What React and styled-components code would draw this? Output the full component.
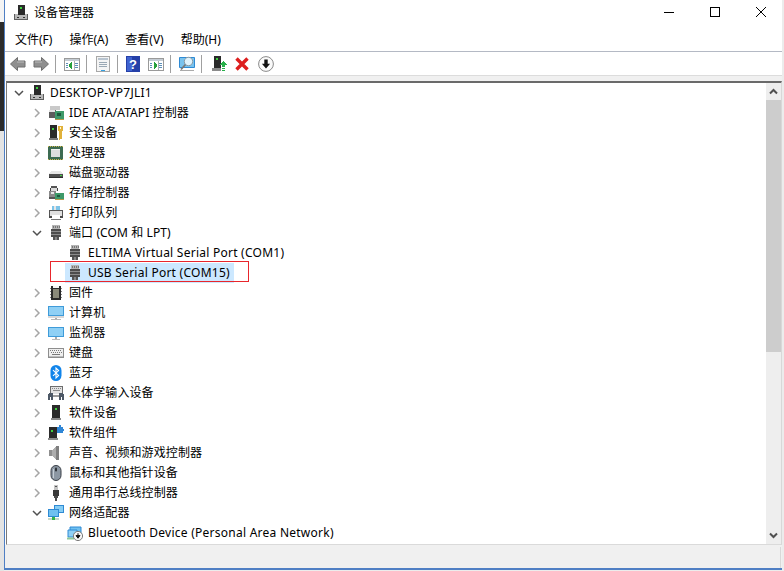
import React from 'react';
import styled, { createGlobalStyle } from 'styled-components';

const GlobalStyle = createGlobalStyle`
  html, body {
    margin: 0;
    padding: 0;
    height: 100%;
    background: #ececec;
    overflow: hidden;
  }
  body {
    font-family: "Noto Sans", "Noto Sans CJK SC", sans-serif;
    font-size: 12px;
    color: #000;
  }
`;

const Desktop = styled.div`
  display: flex;
  width: 784px;
  height: 571px;
`;

const Strip = styled.div`
  width: 4px;
  flex: none;
  background: linear-gradient(to bottom, #f4f4f4 0, #f4f4f4 22px, #2b2b2b 22px, #2b2b2b 131px, #e4e4e4 131px, #e4e4e4 100%);
`;

const Frame = styled.div`
  width: 778px;
  height: 570px;
  flex: none;
  display: flex;
  flex-direction: column;
  background: #fff;
  border-left: 1px solid #4f7fc4;
  border-bottom: 2px solid #4f7fc4;
  box-sizing: border-box;
`;

const TitleBar = styled.div`
  height: 25px;
  flex: none;
  display: flex;
  align-items: center;
  padding-left: 8px;
`;

const TitleText = styled.span`
  margin-left: 5px;
  font-size: 12px;
  line-height: 16px;
`;

const WindowButtons = styled.div`
  margin-left: auto;
  margin-right: -2px;
  display: flex;
  height: 100%;
  align-items: center;
`;

const WindowButton = styled.div`
  width: 46px;
  height: 23px;
  margin-bottom: 2px;
  display: flex;
  align-items: center;
  justify-content: center;
`;

const MenuBar = styled.div`
  height: 27px;
  flex: none;
  display: flex;
  align-items: center;
  padding: 3px 0 0 10px;
  gap: 17px;
  box-sizing: border-box;
  border-bottom: 1px solid #b4b9c4;
`;

const MenuItem = styled.span`
  line-height: 16px;
`;

const ToolBar = styled.div`
  height: 23px;
  flex: none;
  display: flex;
  align-items: center;
  padding-left: 5px;
`;

const ToolIcon = styled.div`
  width: ${(p) => p.$w || 16}px;
  height: 16px;
  flex: none;
  margin-left: ${(p) => p.$gap || 0}px;
  display: flex;
`;

const ToolSep = styled.div`
  width: 1px;
  height: 18px;
  flex: none;
  background: #a0a0a0;
  margin: 0 ${(p) => p.$after || 8}px 0 ${(p) => p.$before || 6}px;
`;

const GapBand = styled.div`
  height: 6px;
  flex: none;
  background: #f0f0f0;
  border-top: 1px solid #dcdcdc;
  box-sizing: border-box;
`;

const Body = styled.div`
  flex: none;
  height: 464px;
  margin-left: 1px;
  width: 776px;
  display: flex;
  box-sizing: border-box;
  border-top: 2px solid #6a6a6a;
  border-left: 1px solid #7a7a7a;
  border-right: 1px solid #d8d8d8;
  border-bottom: 1px solid #dadada;
`;

const Tree = styled.div`
  flex: 1;
  min-width: 0;
  overflow: hidden;
`;

const Row = styled.div`
  position: relative;
  height: 20px;
  display: flex;
  align-items: center;
  padding-left: ${(p) => p.$indent}px;
`;

const Caret = styled.div`
  width: 12px;
  height: 12px;
  flex: none;
  display: flex;
  align-items: center;
  justify-content: center;
  margin-right: ${(p) => p.$gap || 5}px;
`;

const NodeBody = styled.div`
  display: flex;
  align-items: center;
  height: 20px;
  margin-left: ${(p) => (p.$selected ? '-2px' : '0')};
  padding: 0 ${(p) => (p.$selected ? '4px' : '2px')} 0 ${(p) => (p.$selected ? '2px' : '0')};
  background: ${(p) => (p.$selected ? '#cce8ff' : 'transparent')};
`;

const NodeIcon = styled.div`
  width: 16px;
  height: 16px;
  flex: none;
  display: flex;
`;

const NodeLabel = styled.span`
  margin-left: 5px;
  line-height: 16px;
  white-space: nowrap;
  letter-spacing: ${(p) => (p.$latin ? '0.25px' : '0.1px')};
`;

const RedMark = styled.div`
  position: absolute;
  left: 43px;
  top: -2px;
  width: 197px;
  height: 19px;
  border: 1px solid #e8262c;
  pointer-events: none;
`;

const ScrollBar = styled.div`
  width: 15px;
  flex: none;
  display: flex;
  flex-direction: column;
  background: #eeeeee;
`;

const ScrollEnd = styled.div`
  height: 17px;
  flex: none;
  display: flex;
  align-items: center;
  justify-content: center;
`;

const ScrollThumb = styled.div`
  height: 252px;
  flex: none;
  background: #cdcdcd;
`;

const ScrollTrack = styled.div`
  flex: 1;
`;

const StatusBar = styled.div`
  flex: 1;
  background: #f0f0f0;
  display: flex;
  justify-content: flex-end;
  padding: 2px 1px 0 0;
`;

const StatusGrip = styled.div`
  width: 1px;
  background: #d8d8d8;
`;

const Ico = ({ children, w = 16 }) => (
  <svg width={w} height="16" viewBox={`0 0 ${w} 16`} shapeRendering="crispEdges">
    {children}
  </svg>
);

const Soft = ({ children, w = 16 }) => (
  <svg width={w} height="16" viewBox={`0 0 ${w} 16`}>
    {children}
  </svg>
);

const Tower = () => (
  <>
    <path d="M5 0h7v10H5z" fill="#2a2a2a" />
    <path d="M7 2h2v2H7z" fill="#3fd13f" />
    <path d="M1 9h4v1h7V9h3v6H1z" fill="#b8b8b8" />
    <path d="M1 9h1v6H1zM14 9h1v6h-1zM1 14h14v1H1z" fill="#5f5f5f" />
    <path d="M4 12h2v1H4zM10 12h2v1h-2z" fill="#333" />
  </>
);

const PortShape = () => (
  <>
    <path d="M4 0h8v4H4z" fill="#b5b5b5" />
    <path d="M5 1h1v2H5zM7 1h1v2H7zM9 1h1v2H9zM11 1h1v2h-1z" fill="#777" />
    <path d="M3 4h10v8H3z" fill="#4d4d4d" />
    <path d="M3 6h10v1H3zM3 9h10v1H3z" fill="#8c8c8c" />
    <path d="M5 12h6v3H5z" fill="#555" />
    <path d="M7 12h2v3H7z" fill="#888" />
  </>
);

const icons = {
  computer: <Ico><Tower /></Ico>,
  ide: (
    <Ico>
      <path d="M2 1h10v4H2z" fill="#c9c9c9" />
      <path d="M1 5h7v8H1z" fill="#5d5d5d" />
      <path d="M1 5h6v2H1z" fill="#e4e4e4" />
      <path d="M7 6h9v8H7z" fill="#3e9a6a" />
      <path d="M9 8h4v3H9z" fill="#1e5a3e" />
      <path d="M7 14h9v1H7z" fill="#b59a4a" />
    </Ico>
  ),
  security: (
    <Ico>
      <path d="M2 0h7v13H2z" fill="#2a2a2a" />
      <path d="M4 3h2v2H4z" fill="#3fd13f" />
      <path d="M1 13h9v2H1z" fill="#777" />
      <path d="M10 1h5v5h-1v8h-2v1h-1V6h-1z" fill="#e0b13a" />
      <path d="M12 2h1v2h-1z" fill="#fff6d8" />
    </Ico>
  ),
  cpu: (
    <Ico>
      <path d="M0 1h15v14H0z" fill="#3d6b52" />
      <path d="M0 1h1v1H0zM2 1h1v1H2zM4 1h1v1H4zM6 1h1v1H6zM8 1h1v1H8zM10 1h1v1h-1zM12 1h1v1h-1zM14 1h1v1h-1zM0 14h1v1H0zM2 14h1v1H2zM4 14h1v1H4zM6 14h1v1H6zM8 14h1v1H8zM10 14h1v1h-1zM12 14h1v1h-1zM14 14h1v1h-1z" fill="#c9b54f" />
      <path d="M3 4h9v8H3z" fill="#dedede" />
      <path d="M3 4h9v1H3z" fill="#f2f2f2" />
    </Ico>
  ),
  disk: (
    <Ico>
      <path d="M3 6h10l2 3H1z" fill="#e6e6e6" />
      <path d="M1 9h14v4H1z" fill="#4e4e4e" />
      <path d="M1 12h14v1H1z" fill="#2f2f2f" />
      <path d="M12 10h2v1h-2z" fill="#45d645" />
    </Ico>
  ),
  storage: (
    <Ico>
      <path d="M3 1h6v2H3z" fill="#555" />
      <path d="M2 3h8v3H2z" fill="#dcdcdc" />
      <path d="M2 3h1v3H2zM9 3h1v3H9z" fill="#444" />
      <path d="M1 6h7v6H1z" fill="#8a8a8a" />
      <path d="M3 7h3v2H3z" fill="#e8e8e8" />
      <path d="M1 12h6v2H1z" fill="#555" />
      <path d="M7 8h9v6H7z" fill="#3e9a6a" />
      <path d="M9 10h3v2H9z" fill="#1e5a3e" />
      <path d="M7 14h9v1H7z" fill="#b59a4a" />
    </Ico>
  ),
  printer: (
    <Ico>
      <path d="M4 1h8v4H4z" fill="#7ec4e8" />
      <path d="M6 1h2v4H6z" fill="#e6e6e6" />
      <path d="M1 5h14v7H1z" fill="#e0e0e0" />
      <path d="M1 5h14v1H1zM1 6h1v6H1zM14 6h1v6h-1z" fill="#555" />
      <path d="M1 11h14v2H1z" fill="#4a4a4a" />
      <path d="M4 10h8v4H4z" fill="#fff" />
      <path d="M3 14h10v1H3z" fill="#777" />
    </Ico>
  ),
  port: <Ico><PortShape /></Ico>,
  firmware: (
    <Ico>
      <path d="M3 1h10v14H3z" fill="#2a2a2a" />
      <path d="M5 1h6v2H5z" fill="#f6f6f6" />
      <path d="M5 4h6v9H5z" fill="#8a8a7a" />
      <path d="M2 3h1v1H2zM2 6h1v1H2zM2 9h1v1H2zM2 12h1v1H2zM13 3h1v1h-1zM13 6h1v1h-1zM13 9h1v1h-1zM13 12h1v1h-1z" fill="#888" />
    </Ico>
  ),
  pc: (
    <Ico>
      <path d="M0 1h16v10H0z" fill="#3f9bd9" />
      <path d="M1 2h14v8H1z" fill="#8fd0f5" />
      <path d="M0 11h16v2H0z" fill="#d8d8d8" />
      <path d="M7 13h2v1H7z" fill="#aaa" />
      <path d="M3 14h10v1H3z" fill="#b8b8b8" />
    </Ico>
  ),
  monitor: (
    <Ico>
      <path d="M0 2h16v10H0z" fill="#3f9bd9" />
      <path d="M1 3h14v8H1z" fill="#8fd0f5" />
      <path d="M7 12h2v2H7z" fill="#aaa" />
      <path d="M4 14h8v1H4z" fill="#bbb" />
    </Ico>
  ),
  keyboard: (
    <Ico>
      <path d="M0 3h16v10H0z" fill="#8e8e8e" />
      <path d="M1 4h14v8H1z" fill="#efefef" />
      <path d="M2 5h1v1H2zM4 5h1v1H4zM6 5h1v1H6zM8 5h1v1H8zM10 5h1v1h-1zM12 5h1v1h-1zM3 7h1v1H3zM5 7h1v1H5zM7 7h1v1H7zM9 7h1v1H9zM11 7h1v1h-1zM13 7h1v1h-1zM4 9h8v1H4z" fill="#7a7a7a" />
      <path d="M1 11h14v1H1z" fill="#bdbdbd" />
    </Ico>
  ),
  bluetooth: (
    <Soft>
      <rect x="2.5" y="0" width="11" height="16" rx="5.5" fill="#1184ea" />
      <path d="M5 5.2L10.6 10.4 8 13V3L10.6 5.6 5 10.8" fill="none" stroke="#fff" strokeWidth="1.1" />
    </Soft>
  ),
  hid: (
    <Ico>
      <path d="M2 1h13v8H2z" fill="#e2e2e2" />
      <path d="M2 1h13v1H2zM2 2h1v7H2zM14 2h1v7h-1z" fill="#6d6d6d" />
      <path d="M4 3h1v1H4zM6 3h1v1H6zM8 3h1v1H8zM10 3h1v1h-1zM12 3h1v1h-1zM5 5h7v1H5z" fill="#888" />
      <path d="M1 8h4v7H3v-3H2v3H0V9h1z" fill="#4d5866" />
      <path d="M11 8h4v1h1v6h-2v-3h-1v3h-2z" fill="#4d5866" />
      <path d="M5 10h6v2H5z" fill="#9a9a9a" />
    </Ico>
  ),
  softdev: (
    <Ico>
      <path d="M4 0h8v13H4z" fill="#2a2a2a" />
      <path d="M7 3h2v2H7z" fill="#3fd13f" />
      <path d="M3 13h10v2H3z" fill="#8a8a8a" />
    </Ico>
  ),
  softcomp: (
    <Ico>
      <path d="M1 2h8v11H1z" fill="#2a2a2a" />
      <path d="M3 5h2v2H3z" fill="#3fd13f" />
      <path d="M0 13h10v2H0z" fill="#8a8a8a" />
      <path d="M9 2h2V0h2v2h2v2h1v2h-1v2H9z" fill="#2f86d6" />
    </Ico>
  ),
  sound: (
    <Ico>
      <path d="M1 5h3v6H1z" fill="#8f8f8f" />
      <path d="M4 5h1V4h1V3h1V2h1V1h3v14H8v-1H7v-1H6v-1H5v-1H4z" fill="#adadad" />
      <path d="M8 1h3v14H8z" fill="#7f7f7f" />
    </Ico>
  ),
  mouse: (
    <Soft>
      <rect x="3" y="0.5" width="10" height="15" rx="5" fill="#8c97a3" stroke="#3a3f47" />
      <rect x="7" y="2.5" width="2" height="4" rx="1" fill="#2f3339" />
      <path d="M5 4h1v9H5z" fill="#c6ced6" />
    </Soft>
  ),
  usb: (
    <Ico>
      <path d="M6 0h4v5H6z" fill="#c4c4c4" />
      <path d="M7 1h2v1H7z" fill="#555" />
      <path d="M5 5h6v6H5z" fill="#3a3a3a" />
      <path d="M6 11h4v2H6zM7 13h2v3H7z" fill="#4a4a4a" />
    </Ico>
  ),
  network: (
    <Ico>
      <path d="M6 0h10v8H6z" fill="#2f8ad4" />
      <path d="M7 1h8v6H7z" fill="#86cdf4" />
      <path d="M0 4h11v8H0z" fill="#2f8ad4" />
      <path d="M1 5h9v6H1z" fill="#6fc0f0" />
      <path d="M4 12h3v1H4z" fill="#35b54a" />
      <path d="M0 13h11v2H0z" fill="#c8d8c8" />
      <path d="M4 13h3v2H4z" fill="#35b54a" />
    </Ico>
  ),
  btnet: (
    <Soft>
      <path d="M3 2h11v8H3z" fill="#6fc0f0" stroke="#2f8ad4" />
      <path d="M1 5h9v7H1z" fill="#8fd0f5" stroke="#2f8ad4" />
      <path d="M0 13.5h7" stroke="#8fc89a" strokeWidth="2" />
      <circle cx="11" cy="11" r="4.6" fill="#f6f6f6" stroke="#7c7c7c" />
      <path d="M11 8.2v4.8M9 10.6h4l-2 2.6z" fill="#111" stroke="#111" strokeWidth="1" />
    </Soft>
  ),
};

const rows = [
  { icon: 'ide', label: 'IDE ATA/ATAPI 控制器', caret: 'closed' },
  { icon: 'security', label: '安全设备', caret: 'closed' },
  { icon: 'cpu', label: '处理器', caret: 'closed' },
  { icon: 'disk', label: '磁盘驱动器', caret: 'closed' },
  { icon: 'storage', label: '存储控制器', caret: 'closed' },
  { icon: 'printer', label: '打印队列', caret: 'closed' },
  { icon: 'port', label: '端口 (COM 和 LPT)', caret: 'open' },
  { icon: 'port', label: 'ELTIMA Virtual Serial Port (COM1)', child: true, latin: true },
  { icon: 'port', label: 'USB Serial Port (COM15)', child: true, latin: true, selected: true },
  { icon: 'firmware', label: '固件', caret: 'closed' },
  { icon: 'pc', label: '计算机', caret: 'closed' },
  { icon: 'monitor', label: '监视器', caret: 'closed' },
  { icon: 'keyboard', label: '键盘', caret: 'closed' },
  { icon: 'bluetooth', label: '蓝牙', caret: 'closed' },
  { icon: 'hid', label: '人体学输入设备', caret: 'closed' },
  { icon: 'softdev', label: '软件设备', caret: 'closed' },
  { icon: 'softcomp', label: '软件组件', caret: 'closed' },
  { icon: 'sound', label: '声音、视频和游戏控制器', caret: 'closed' },
  { icon: 'mouse', label: '鼠标和其他指针设备', caret: 'closed' },
  { icon: 'usb', label: '通用串行总线控制器', caret: 'closed' },
  { icon: 'network', label: '网络适配器', caret: 'open' },
  { icon: 'btnet', label: 'Bluetooth Device (Personal Area Network)', child: true, latin: true },
];

const CaretIcon = ({ type }) => {
  if (type === 'open') {
    return (
      <svg width="12" height="12" viewBox="0 0 12 12">
        <path d="M2 4l4 4 4-4" fill="none" stroke="#505050" strokeWidth="1.5" />
      </svg>
    );
  }
  return (
    <svg width="12" height="12" viewBox="0 0 12 12">
      <path d="M4 2l4 4-4 4" fill="none" stroke="#a6a6a6" strokeWidth="1.5" />
    </svg>
  );
};

const TreeRow = ({ row }) => (
  <Row $indent={row.child ? 60 : 24}>
    {row.caret && <Caret><CaretIcon type={row.caret} /></Caret>}
    <NodeBody $selected={row.selected}>
      <NodeIcon>{icons[row.icon]}</NodeIcon>
      <NodeLabel $latin={row.latin}>{row.label}</NodeLabel>
    </NodeBody>
    {row.selected && <RedMark />}
  </Row>
);

const ArrowTool = ({ flip }) => (
  <Soft>
    <path
      d={flip ? 'M15.5 8L8.5 1.5V5H1v6h7.5v3.5z' : 'M.5 8L7.5 1.5V5H15v6H7.5v3.5z'}
      fill="#8f8f8f"
      stroke="#6f6f6f"
    />
    <path d={flip ? 'M2 6h7' : 'M7 6h7'} stroke="#bdbdbd" />
  </Soft>
);

const PanelTool = ({ arrow }) => (
  <Ico>
    <path d="M0 2h16v13H0z" fill="#9a9a9a" />
    <path d="M1 3h14v11H1z" fill="#fff" />
    <path d="M1 3h14v2H1z" fill="#c4ccd4" />
    <path d="M2 7h2v1H2zM2 9h2v1H2zM2 11h2v1H2zM11 7h3v1h-3zM11 9h3v1h-3zM11 11h3v1h-3z" fill="#5c8fb8" />
    <path d="M10 5h1v9h-1z" fill="#b0b0b0" />
    {arrow === 'left' ? (
      <path d="M8 6v7H7v-1H6v-1H5V8h1V7h1V6z" fill="#27a03a" />
    ) : (
      <path d="M6 6v7h1v-1h1v-1h1V8H8V7H7V6z" fill="#27a03a" />
    )}
  </Ico>
);

const App = () => (
  <Desktop>
    <GlobalStyle />
    <Strip />
    <Frame>
      <TitleBar>
        <NodeIcon>{icons.computer}</NodeIcon>
        <TitleText>设备管理器</TitleText>
        <WindowButtons>
          <WindowButton>
            <svg width="10" height="10" viewBox="0 0 10 10" shapeRendering="crispEdges"><path d="M0 5h10v1H0z" fill="#000" /></svg>
          </WindowButton>
          <WindowButton>
            <svg width="10" height="10" viewBox="0 0 10 10" shapeRendering="crispEdges"><path d="M.5.5h9v9h-9z" fill="none" stroke="#000" /></svg>
          </WindowButton>
          <WindowButton>
            <svg width="10" height="10" viewBox="0 0 10 10"><path d="M0 0l10 10M10 0L0 10" stroke="#000" strokeWidth="1" /></svg>
          </WindowButton>
        </WindowButtons>
      </TitleBar>
      <MenuBar>
        <MenuItem>文件(F)</MenuItem>
        <MenuItem>操作(A)</MenuItem>
        <MenuItem>查看(V)</MenuItem>
        <MenuItem>帮助(H)</MenuItem>
      </MenuBar>
      <ToolBar>
        <ToolIcon><ArrowTool /></ToolIcon>
        <ToolIcon $gap={7}><ArrowTool flip /></ToolIcon>
        <ToolSep />
        <ToolIcon><PanelTool arrow="left" /></ToolIcon>
        <ToolSep />
        <ToolIcon>
          <Ico>
            <path d="M1 0h14v16H1z" fill="#a8a8a8" />
            <path d="M2 1h12v14H2z" fill="#f4f4f4" />
            <path d="M3 2h10v2H3z" fill="#b8c4d0" />
            <path d="M4 6h8v1H4zM4 8h8v1H4zM4 10h8v1H4z" fill="#9aa8b4" />
            <path d="M6 14h4v1H6z" fill="#35a0e0" />
          </Ico>
        </ToolIcon>
        <ToolSep />
        <ToolIcon $w={14}>
          <svg width="14" height="16" viewBox="0 0 14 16">
            <rect width="14" height="16" fill="#2540a8" />
            <rect x="1" y="1" width="5" height="14" fill="#3f63d0" />
            <text x="7" y="13" fontSize="13" fontWeight="700" textAnchor="middle" fill="#fff" fontFamily="Liberation Sans, sans-serif">?</text>
          </svg>
        </ToolIcon>
        <ToolIcon $gap={8}><PanelTool arrow="right" /></ToolIcon>
        <ToolSep />
        <ToolIcon>
          <Soft>
            <path d="M.5 1.5h15v10H.5z" fill="#79c3ee" stroke="#2f8ad4" />
            <circle cx="9.5" cy="5.5" r="4.2" fill="#dff2fc" stroke="#8a9aa4" />
            <path d="M6.5 8.5L2 13.5" stroke="#777" strokeWidth="1.8" />
            <path d="M1 14.5h14" stroke="#aaa" />
          </Soft>
        </ToolIcon>
        <ToolSep $after={10} />
        <ToolIcon>
          <Ico>
            <path d="M2 0h7v12H2z" fill="#2a2a2a" />
            <path d="M4 2h2v2H4z" fill="#3fd13f" />
            <path d="M0 12h9v3H0z" fill="#8a8a8a" />
            <path d="M11 5h1v1h1v1h1v1h1v1h-2v2h-3V9H8V8h1V7h1V6h1z" fill="#27b04a" />
            <path d="M10 12h3v1h-3zM10 14h3v1h-3z" fill="#27b04a" />
          </Ico>
        </ToolIcon>
        <ToolIcon $gap={6} $w={16}>
          <svg width="16" height="16" viewBox="0 0 16 16">
            <path d="M2.5 2.5l11 11M13.5 2.5l-11 11" stroke="#dd1f1f" strokeWidth="3.4" />
          </svg>
        </ToolIcon>
        <ToolIcon $gap={8}>
          <Soft>
            <circle cx="8" cy="8" r="7.4" fill="#fafafa" stroke="#8a8a8a" />
            <path d="M6.3 3.5h3.4v4.3h2.4L8 12.5 3.9 7.8h2.4z" fill="#111" />
          </Soft>
        </ToolIcon>
      </ToolBar>
      <GapBand />
      <Body>
        <Tree>
          <Row $indent={6}>
            <Caret $gap={4}><CaretIcon type="open" /></Caret>
            <NodeBody>
              <NodeIcon>{icons.computer}</NodeIcon>
              <NodeLabel $latin>DESKTOP-VP7JLI1</NodeLabel>
            </NodeBody>
          </Row>
          {rows.map((row) => (
            <TreeRow key={row.label} row={row} />
          ))}
        </Tree>
        <ScrollBar>
          <ScrollEnd>
            <svg width="9" height="7" viewBox="0 0 9 7"><path d="M1 5.5l3.5-3.5L8 5.5" fill="none" stroke="#505050" strokeWidth="2" /></svg>
          </ScrollEnd>
          <ScrollThumb />
          <ScrollTrack />
          <ScrollEnd>
            <svg width="9" height="7" viewBox="0 0 9 7"><path d="M1 1.5l3.5 3.5L8 1.5" fill="none" stroke="#505050" strokeWidth="2" /></svg>
          </ScrollEnd>
        </ScrollBar>
      </Body>
      <StatusBar>
        <StatusGrip />
      </StatusBar>
    </Frame>
  </Desktop>
);

export default App;
